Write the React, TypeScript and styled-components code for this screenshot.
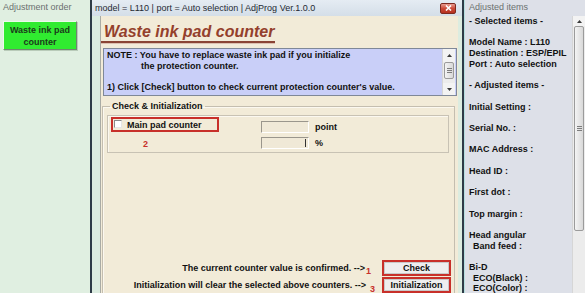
import styled, { createGlobalStyle } from "styled-components";

const GlobalStyle = createGlobalStyle`
  html, body { margin: 0; padding: 0; background: #ffffff; }
  body { font-family: "Liberation Sans", Arial, sans-serif; }
`;

const Screen = styled.div`
  display: flex;
  width: 585px;
  height: 293px;
  overflow: hidden;
  font-family: "Liberation Sans", Arial, sans-serif;
  font-size: 9px;
  color: #111;
`;

const Divider = styled.div`
  width: 2px;
  flex: none;
  background: #2e3b47;
`;

const PanelHeader = styled.div`
  height: 16px;
  line-height: 15px;
  padding-left: ${(p: { $inset?: number }) => p.$inset ?? 3}px;
  color: #6b7070;
  font-size: 9px;
  white-space: nowrap;
`;

/* left column */
const OrderPanel = styled.aside`
  width: 90px;
  flex: none;
  display: flex;
  flex-direction: column;
  background: #e0efe1;
`;

const OrderButton = styled.div`
  margin: 5px 0 0 3px;
  width: 74px;
  height: 29px;
  box-sizing: border-box;
  display: flex;
  align-items: center;
  justify-content: center;
  text-align: center;
  background: #30eb30;
  border: 1px solid;
  border-color: #eafbea #6f856f #6f856f #eafbea;
  box-shadow: 1px 1px 0 #b9cbb9;
  color: #1b3a1b;
  font-weight: bold;
  font-size: 9px;
  line-height: 12px;
`;

/* middle window */
const Window = styled.section`
  width: 370px;
  flex: none;
  display: flex;
  flex-direction: column;
  background: #dcece0;
`;

const TitleBar = styled.header`
  height: 16px;
  flex: none;
  display: flex;
  align-items: center;
  justify-content: space-between;
  padding: 0 6px 0 3px;
  background: linear-gradient(#e5ecf3, #d4dee8);
  color: #1f2a33;
  font-size: 9px;
`;

const CloseButton = styled.div`
  width: 16px;
  height: 11px;
  box-sizing: border-box;
  border: 1px solid #7c2a20;
  border-radius: 2px;
  background: linear-gradient(#e99c90, #cc4a38 50%, #b5301e);
  display: flex;
  align-items: center;
  justify-content: center;
`;

const WindowBody = styled.div`
  flex: 1;
  min-height: 0;
  display: flex;
  padding: 0 4px 0 8px;
`;

const Content = styled.main`
  flex: 1;
  min-width: 0;
  display: flex;
  flex-direction: column;
  overflow: hidden;
  background: #f2ebd8;
  border-left: 1px solid #a9aba5;
  padding-left: 1px;
  font-weight: bold;
`;

const PageTitle = styled.h1`
  align-self: flex-start;
  margin: 7px 0 0 -1px;
  padding-left: 3px;
  width: 171px;
  font: italic bold 16px/18px "Liberation Sans", Arial, sans-serif;
  color: #94402c;
  border-bottom: 2px solid #8a4434;
  box-shadow: 0 1px 0 #dcc0b0;
`;

const NoteBox = styled.div`
  margin: 5px 1px 0 1px;
  height: 48px;
  box-sizing: border-box;
  display: flex;
  border: 1px solid #7f8898;
  background: #c9cff8;
`;

const NoteText = styled.div`
  flex: 1;
  padding: 1px 0 0 3px;
  line-height: 10.8px;
  white-space: nowrap;
`;

const NoteIndent = styled.div`
  padding-left: 34px;
  margin-bottom: 10.8px;
`;

const Scrollbar = styled.div`
  width: 12px;
  flex: none;
  display: flex;
  flex-direction: column;
  background: #ececec;
  border-left: 1px solid #d6d6d6;
`;

const ScrollArrow = styled.div<{ $h: number }>`
  height: ${(p) => p.$h}px;
  flex: none;
  display: flex;
  align-items: center;
  justify-content: center;
  background: #f3f3f3;
`;

const Thumb = styled.div<{ $h: number }>`
  height: ${(p) => p.$h}px;
  flex: none;
  box-sizing: border-box;
  margin: 0 1px;
  display: flex;
  align-items: center;
  justify-content: center;
  border: 1px solid #9b9b9b;
  border-radius: 2px;
  background: linear-gradient(to right, #f4f4f4, #d9d9d9);
`;

const Track = styled.div`
  flex: 1;
`;

const GroupBox = styled.fieldset`
  flex: 1;
  min-width: 0;
  display: flex;
  flex-direction: column;
  margin: 5px 3px -4px 0;
  padding: 0 3px 3px 4px;
  border: 1px solid #c4beb0;
  box-shadow: inset 1px 1px 0 #fbf8f0;
`;

const Legend = styled.legend`
  margin-left: 3px;
  padding: 0 2px;
  line-height: 11px;
`;

const CounterBox = styled.div`
  margin-top: 3px;
  width: 342px;
  height: 38px;
  box-sizing: border-box;
  display: grid;
  grid-template-columns: 150px auto;
  padding: 1px 0 0 3px;
  border: 1px solid #c8c2b4;
  box-shadow: inset 1px 1px 0 #fbf8f0;
`;

const CounterItem = styled.label`
  width: 108px;
  height: 15px;
  box-sizing: border-box;
  display: flex;
  align-items: center;
  gap: 5px;
  padding-left: 1px;
  border: 2px solid #c8302a;
`;

const CheckSquare = styled.span`
  width: 8px;
  height: 8px;
  box-sizing: border-box;
  margin-top: -2px;
  background: #ffffff;
  border: 1px solid;
  border-color: #8a8a8a #e6e6e6 #e6e6e6 #8a8a8a;
`;

const Marker = styled.span<{ $drop?: number; $gap?: number }>`
  color: #c8302a;
  font-weight: bold;
  line-height: 11px;
  margin-left: ${(p) => p.$gap ?? 0}px;
  transform: translateY(${(p) => p.$drop ?? 0}px);
`;

const StepNote = styled.div`
  padding-left: 32px;
  margin-top: 7px;
  color: #c8302a;
  line-height: 11px;
`;

const ValueList = styled.div`
  display: flex;
  flex-direction: column;
  gap: 4px;
  padding-top: 4px;
`;

const ValueRow = styled.div`
  display: flex;
  align-items: center;
  gap: 6px;
`;

const ValueField = styled.div<{ $caret?: boolean }>`
  width: 48px;
  height: 12px;
  box-sizing: border-box;
  border: 1px solid;
  border-color: #9a968c #ffffff #ffffff #9a968c;
  background: #f0e9d7;
  display: flex;
  justify-content: flex-end;
  padding: 1px 2px;
  &::after {
    content: "";
    width: 1px;
    background: ${(p) => (p.$caret ? "#333" : "transparent")};
  }
`;

const ActionList = styled.div`
  margin-top: auto;
  display: flex;
  flex-direction: column;
  gap: 1px;
`;

const ActionRow = styled.div`
  display: flex;
  align-items: center;
  justify-content: flex-end;
  white-space: nowrap;
`;

const ActionButton = styled.div`
  width: 69px;
  height: 16px;
  box-sizing: border-box;
  margin-left: ${(p: { $gap: number }) => p.$gap}px;
  display: flex;
  align-items: center;
  justify-content: center;
  border: 2px solid #c8302a;
  background: #eeeeee;
  box-shadow: inset 0 0 0 1px #c9c9c9;
`;

/* right column */
const ItemsPanel = styled.aside`
  flex: 1;
  min-width: 0;
  display: flex;
  flex-direction: column;
  background: #dde0e8;
  border-left: 1px solid #b5dedf;
`;

const ItemsBody = styled.div`
  flex: 1;
  min-height: 0;
  display: flex;
`;

const ItemList = styled.div`
  flex: 1;
  padding-left: 4px;
  display: flex;
  flex-direction: column;
  gap: 10.7px;
  font-weight: bold;
  line-height: 10.7px;
  white-space: nowrap;
  overflow: hidden;
`;

const ItemLine = styled.div<{ $indent?: boolean }>`
  padding-left: ${(p) => (p.$indent ? 4 : 0)}px;
`;

const Arrow = ({ down }: { down?: boolean }) => (
  <svg width="5" height="3" viewBox="0 0 5 3">
    <polygon points={down ? "0,0 5,0 2.5,3" : "0,3 5,3 2.5,0"} fill="#3a3a3a" />
  </svg>
);

const Grip = () => (
  <svg width="5" height="5" viewBox="0 0 5 5">
    <path d="M0 0.5H5M0 2.5H5M0 4.5H5" stroke="#7d7d7d" strokeWidth="1" />
  </svg>
);

const adjustedItems: string[][] = [
  ["- Selected items -"],
  ["Model Name : L110", "Destination : ESP/EPIL", "Port : Auto selection"],
  ["- Adjusted items -"],
  ["Initial Setting :"],
  ["Serial No. :"],
  ["MAC Address :"],
  ["Head ID :"],
  ["First dot :"],
  ["Top margin :"],
  ["Head angular", " Band feed :"],
  ["Bi-D", " ECO(Black)  :", " ECO(Color)  :"],
];

export default function App() {
  return (
    <>
      <GlobalStyle />
      <Screen>
        <OrderPanel>
          <PanelHeader>Adjustment order</PanelHeader>
          <OrderButton>
            Waste ink pad
            <br />
            counter
          </OrderButton>
        </OrderPanel>
        <Divider />

        <Window>
          <TitleBar>
            <span>model = L110 | port = Auto selection | AdjProg Ver.1.0.0</span>
            <CloseButton>
              <svg width="7" height="6" viewBox="0 0 7 6">
                <path d="M1 0.5L6 5.5M6 0.5L1 5.5" stroke="#ffffff" strokeWidth="1.6" />
              </svg>
            </CloseButton>
          </TitleBar>
          <WindowBody>
            <Content>
              <PageTitle>Waste ink pad counter</PageTitle>

              <NoteBox>
                <NoteText>
                  <div>NOTE : You have to replace waste ink pad if you initialize</div>
                  <NoteIndent>the protection counter.</NoteIndent>
                  <div>1) Click [Check] button to check current protection counter's value.</div>
                </NoteText>
                <Scrollbar style={{ marginRight: 1 }}>
                  <ScrollArrow $h={13}>
                    <Arrow />
                  </ScrollArrow>
                  <Thumb $h={17}>
                    <Grip />
                  </Thumb>
                  <Track />
                  <ScrollArrow $h={12}>
                    <Arrow down />
                  </ScrollArrow>
                </Scrollbar>
              </NoteBox>

              <GroupBox>
                <Legend>Check &amp; Initialization</Legend>
                <CounterBox>
                  <div>
                    <CounterItem>
                      <CheckSquare />
                      Main pad counter
                    </CounterItem>
                    <StepNote>2</StepNote>
                  </div>
                  <ValueList>
                    <ValueRow>
                      <ValueField />
                      point
                    </ValueRow>
                    <ValueRow>
                      <ValueField $caret />
                      %
                    </ValueRow>
                  </ValueList>
                </CounterBox>

                <ActionList>
                  <ActionRow>
                    The current counter value is confirmed. --&gt;
                    <Marker $gap={1} $drop={3}>1</Marker>
                    <ActionButton $gap={11}>Check</ActionButton>
                  </ActionRow>
                  <ActionRow>
                    Initialization will clear the selected above counters. --&gt;
                    <Marker $gap={4} $drop={4}>3</Marker>
                    <ActionButton $gap={7}>Initialization</ActionButton>
                  </ActionRow>
                </ActionList>
              </GroupBox>
            </Content>
          </WindowBody>
        </Window>
        <Divider />

        <ItemsPanel>
          <PanelHeader $inset={4}>Adjusted items</PanelHeader>
          <ItemsBody>
            <ItemList>
              {adjustedItems.map((group, i) => (
                <div key={i}>
                  {group.map((line) => (
                    <ItemLine key={line} $indent={line.startsWith(" ")}>
                      {line.trim()}
                    </ItemLine>
                  ))}
                </div>
              ))}
            </ItemList>
            <Scrollbar>
              <ScrollArrow $h={10}>
                <Arrow />
              </ScrollArrow>
              <Thumb $h={205}>
                <Grip />
              </Thumb>
              <Track />
            </Scrollbar>
          </ItemsBody>
        </ItemsPanel>
      </Screen>
    </>
  );
}
